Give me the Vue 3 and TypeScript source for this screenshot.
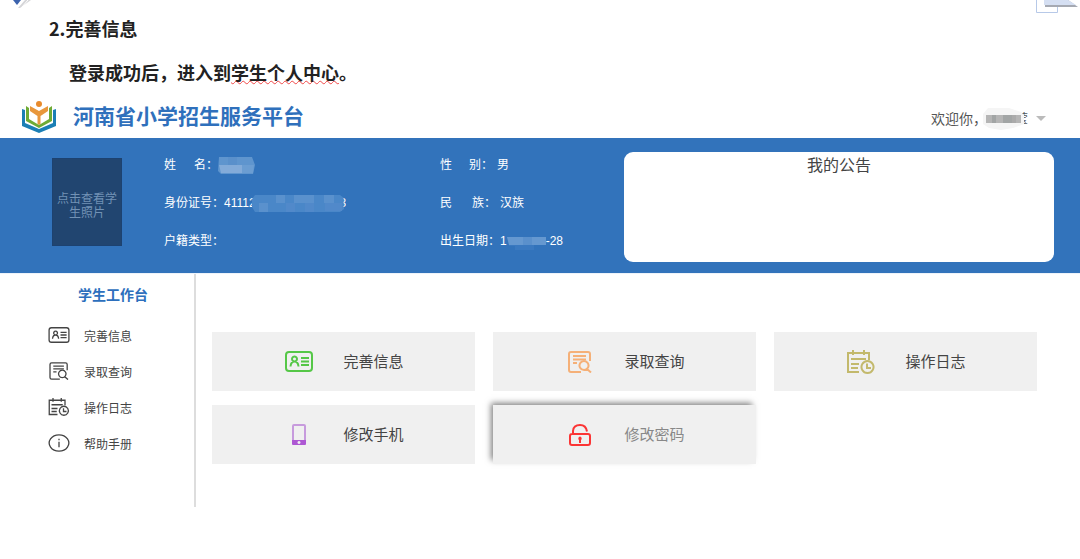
<script setup lang="ts">
interface Stroke {
  d: string
  fill?: boolean
}

interface Icon {
  width: number
  height: number
  strokes: Stroke[]
}

interface Entry {
  label: string
  icon: string
}

interface Tile extends Entry {
  tone: string
  active?: boolean
}

const icons: Record<string, Icon> = {
  card: {
    width: 28,
    height: 21,
    strokes: [
      { d: 'M4 1H24Q27 1 27 4V17Q27 20 24 20H4Q1 20 1 17V4Q1 1 4 1Z' },
      { d: 'M9.500 5.500a2.500 2.500 0 1 0 .01 0M5.500 15.500Q6 10.500 9.500 10.500T13.500 15.500M16 7H24M16 10.500H24M16 14H24' },
    ],
  },
  search: {
    width: 24,
    height: 22,
    strokes: [
      { d: 'M13 21H3Q1 21 1 19V3Q1 1 3 1H20Q22 1 22 3V10M5 5H18M5 8.500H18M5 12H9' },
      { d: 'M16 10a4.500 4.500 0 1 0 .01 0M19 18L23 21.500' },
    ],
  },
  log: {
    width: 28,
    height: 24,
    strokes: [
      { d: 'M12 22H1V3H22V10M6 0V5M17 0V5M4 9H19M4 14H12M4 18H11' },
      { d: 'M20.500 11a6 6 0 1 0 .01 0M20 13.500V18H24' },
    ],
  },
  info: {
    width: 28,
    height: 23,
    strokes: [
      { d: 'M14 1A12.500 10.500 0 1 0 14.010 1' },
      { d: 'M14 10V17M14 6V8' },
    ],
  },
  phone: {
    width: 14,
    height: 21,
    strokes: [
      { d: 'M1 17V2Q1 1 2 1H12Q13 1 13 2V17' },
      { d: 'M0 16H14V20Q14 21 13 21H1Q0 21 0 20ZM7 17a1.500 1.500 0 1 0 .01 0Z', fill: true },
    ],
  },
  lock: {
    width: 22,
    height: 22,
    strokes: [
      { d: 'M3 10H19Q21 10 21 12V19Q21 21 19 21H3Q1 21 1 19V12Q1 10 3 10ZM4 10V7Q4.500 1 11 1Q17 1 18 7.500' },
      { d: 'M11 12.500a2 2 0 0 1 1 3.500V19H10V16a2 2 0 0 1 1-3.500Z', fill: true },
    ],
  },
}

const menu: Entry[] = [
  { label: '完善信息', icon: 'card' },
  { label: '录取查询', icon: 'search' },
  { label: '操作日志', icon: 'log' },
  { label: '帮助手册', icon: 'info' },
]

const tiles: Tile[] = [
  { label: '完善信息', icon: 'card', tone: 'green' },
  { label: '录取查询', icon: 'search', tone: 'orange' },
  { label: '操作日志', icon: 'log', tone: 'olive' },
  { label: '修改手机', icon: 'phone', tone: 'purple' },
  { label: '修改密码', icon: 'lock', tone: 'red', active: true },
]
</script>

<template>
  <div class="page">
    <svg class="corner-left" viewBox="0 0 32 10" aria-hidden="true">
      <path d="M20 8L31 0H25L18 8Z" fill="#d5d5d8" />
      <path d="M13 0H21L17 5Z" fill="#3d63ad" />
      <path d="M22 7L28 0" stroke="#fff" stroke-width="1" />
    </svg>
    <svg class="corner-right" viewBox="0 0 46 16" aria-hidden="true">
      <path d="M2.500 0V12.500H23.500V0" fill="#fff" stroke="#b7c9e8" />
      <path d="M11 0H34L44 7H11Z" fill="#a5a9b2" />
      <path d="M10 0H34L42 5H10Z" fill="#d5dff2" />
    </svg>

    <section class="guide">
      <h1>2.完善信息</h1>
      <p>登录成功后，进入到<span class="checked">学生个人中心</span>。</p>
    </section>

    <header class="topbar">
      <svg class="logo" viewBox="0 0 34 32" aria-hidden="true">
        <circle cx="17" cy="3" r="3" fill="#e88b2d" />
        <path d="M8 5L17 10L26 5V10L18.500 15V23L17 24L15.500 23V15L8 10Z" fill="#e8973c" />
        <path d="M4 5L7 7V18L17 24L27 18V7L30 5V20L17 27L4 20Z" fill="#6eab35" />
        <path d="M0 8L3 9V22L17 28L31 22V9L34 8V25L17 32L0 25Z" fill="#1b7fb5" />
      </svg>
      <h2>河南省小学招生服务平台</h2>
      <button class="account" type="button">
        <span>欢迎你，</span>
        <span class="user">
          <span class="user-name">莹</span>
          <svg class="user-mask" viewBox="0 0 46 23" aria-hidden="true">
            <path d="M5 1H26L38 5L41 8V17L30 21L18 23L6 21L0 17V7Z" fill="#f5f5f5" />
            <path d="M3 8H38V16H3Z" fill="#b5b5b5" />
            <path d="M9 8H13V16H9ZM20 8H29V16H20Z" fill="#a2a5a5" />
            <path d="M29 8H33V16H29Z" fill="#aaa" />
          </svg>
        </span>
        <svg class="caret" viewBox="0 0 10 5" aria-hidden="true"><path d="M0 0H10L5 5Z" fill="#bbb" /></svg>
      </button>
    </header>

    <section class="profile">
      <button class="photo" type="button">点击查看学生照片</button>
      <dl class="facts">
        <div>
          <dt><span class="pair name"><i>姓</i><i>名</i></span>：</dt>
          <dd>
            <svg class="mask short" viewBox="0 0 37 17" preserveAspectRatio="none" aria-hidden="true">
              <path d="M1 0H34L37 8L35 17H3L0 14Z" fill="#5f95ce" />
              <path d="M1 8H24V16H3Z" fill="#83abd9" />
              <path d="M24 8H36L35 16H24Z" fill="#6b9dd2" />
              <path d="M10 0H19V8H10Z" fill="#5a90cb" />
            </svg>
          </dd>
        </div>
        <div>
          <dt>身份证号：</dt>
          <dd>
            <span>41112</span>
            <svg class="mask long" viewBox="0 0 92 17" preserveAspectRatio="none" aria-hidden="true">
              <path d="M3 0H88L92 3V14L88 17H3L0 12V4Z" fill="#4a87c8" />
              <path d="M7 8H16V17H7ZM24 0H33V8H24ZM42 0H62V8H42ZM72 0H82V8H72Z" fill="#5a91cd" />
              <path d="M34 8H43V17H34ZM53 8H62V17H53ZM73 8H90V16H73Z" fill="#5189ca" />
            </svg>
            <span class="tail">3</span>
          </dd>
        </div>
        <div>
          <dt>户籍类型：</dt>
          <dd></dd>
        </div>
      </dl>
      <dl class="facts">
        <div>
          <dt><span class="pair gender"><i>性</i><i>别</i></span>：</dt>
          <dd class="spaced">男</dd>
        </div>
        <div>
          <dt><span class="pair nation"><i>民</i><i>族</i></span>：</dt>
          <dd class="spaced">汉族</dd>
        </div>
        <div>
          <dt>出生日期：</dt>
          <dd>
            <span>1</span>
            <svg class="mask medium" viewBox="0 0 39 17" preserveAspectRatio="none" aria-hidden="true">
              <path d="M0 4H38V12H27V17H8V13H2Z" fill="#3a79c0" />
              <path d="M0 4H39V12H2Z" fill="#6598d0" />
              <path d="M16 4H25V12H16Z" fill="#5a90cc" />
            </svg>
            <span>-28</span>
          </dd>
        </div>
      </dl>
      <section class="notice">
        <h3>我的公告</h3>
      </section>
    </section>

    <div class="workspace">
      <nav class="sidebar" aria-label="学生工作台">
        <h3>学生工作台</h3>
        <a v-for="item in menu" :key="item.label" href="#">
          <svg :class="['menu-icon', item.icon]" :viewBox="`0 0 ${icons[item.icon].width} ${icons[item.icon].height}`" aria-hidden="true">
            <path v-for="s in icons[item.icon].strokes" :key="s.d" :d="s.d" :class="{ solid: s.fill }" />
          </svg>
          <span>{{ item.label }}</span>
        </a>
      </nav>
      <main class="tiles">
        <a v-for="tile in tiles" :key="tile.label" href="#" :class="['tile', { active: tile.active }]">
          <span :class="['slot', tile.tone]">
            <svg :class="['tile-icon', tile.icon]" :viewBox="`0 0 ${icons[tile.icon].width} ${icons[tile.icon].height}`" aria-hidden="true">
              <path v-for="s in icons[tile.icon].strokes" :key="s.d" :d="s.d" :class="{ solid: s.fill }" />
            </svg>
          </span>
          <span>{{ tile.label }}</span>
        </a>
      </main>
    </div>
  </div>
</template>

<style>
body {
  background: #fff;
}
</style>

<style scoped>
.page {
  position: relative;
  overflow: hidden;
  color: #444;
  font-family: "Liberation Sans", "Noto Sans CJK SC", sans-serif;
  font-size: 12px;
}

h1,
h2,
h3,
p,
dl,
dd {
  margin: 0;
}

button {
  border: 0;
  padding: 0;
  background: none;
  font-family: inherit;
  cursor: pointer;
}

a {
  color: inherit;
  text-decoration: none;
}

svg {
  display: block;
  flex: none;
}

.corner-left {
  position: absolute;
  top: 0;
  left: 0;
  width: 32px;
  height: 10px;
}

.corner-right {
  position: absolute;
  top: 0;
  right: 0;
  width: 46px;
  height: 16px;
}

.guide {
  padding: 6px 49px 1px;
  color: #222;
  font-family: "Noto Sans CJK SC", sans-serif;
}

.guide h1,
.guide p {
  font-size: 18px;
  font-weight: 700;
  line-height: 44px;
}

.guide p {
  padding-left: 20px;
}

.checked {
  text-decoration: underline wavy #f04848 1px;
  text-decoration-skip-ink: none;
  text-underline-offset: 0;
}

.topbar {
  display: flex;
  align-items: center;
  min-height: 43px;
  padding: 0 34px 0 22px;
}

.logo {
  width: 34px;
  height: 32px;
}

.topbar h2 {
  margin-left: 17px;
  color: #2f70bc;
  font-size: 21px;
  line-height: 30px;
}

.account {
  display: flex;
  align-items: center;
  margin-left: auto;
  padding-top: 4px;
  color: #555;
  font-size: 14px;
  line-height: 20px;
}

.user {
  position: relative;
  display: flex;
  justify-content: flex-end;
  width: 41px;
  margin-right: 8px;
}

.user-name {
  font-size: 12px;
}

.user-mask {
  position: absolute;
  top: -2px;
  left: -4px;
  width: 46px;
  height: 23px;
}

.caret {
  width: 10px;
  height: 5px;
}

.profile {
  display: grid;
  grid-template-columns: 112px minmax(0, 276fr) minmax(0, 184fr) minmax(0, 430fr);
  align-items: start;
  padding: 14px 26px 11px 52px;
  background: #3273bb;
  color: #fff;
}

.photo {
  width: 70px;
  height: 88px;
  margin-top: 6px;
  padding: 12px 4px 4px;
  border: 1px solid #1d4270;
  background: #214570;
  color: #7292b5;
  font-size: 12px;
  line-height: 14px;
}

.facts {
  display: grid;
  gap: 16px;
  padding-top: 2px;
  line-height: 22px;
}

.facts div,
.facts dd {
  display: flex;
  align-items: center;
  white-space: nowrap;
}

.facts div {
  height: 22px;
}

.facts dt {
  display: flex;
}

.facts i {
  font-style: normal;
}

.pair {
  display: flex;
  justify-content: space-between;
}

.name {
  width: 42px;
}

.gender {
  width: 41px;
}

.nation {
  width: 44px;
}

.facts .spaced {
  padding-left: 4px;
}

.mask {
  position: relative;
  height: 17px;
}

.short {
  width: 37px;
}

.medium {
  width: 39px;
}

.long {
  width: 92px;
  margin: 0 -4px 0 -4px;
}

.tail {
  clip-path: inset(0 0 0 4px);
}

.notice {
  min-height: 110px;
  border-radius: 9px;
  background: #fff;
  color: #444;
  text-align: center;
}

.notice h3 {
  font-size: 16px;
  font-weight: 400;
  line-height: 28px;
}

.workspace {
  display: flex;
  align-items: stretch;
  border-top: 1px solid #edf3fa;
}

.sidebar {
  box-sizing: border-box;
  flex: none;
  width: 196px;
  min-height: 233px;
  padding: 7px 0 40px 48px;
  border-right: 2px solid #ddd;
}

.sidebar h3 {
  margin: 0 0 8px 30px;
  color: #2d6fbd;
  font-size: 14px;
  line-height: 28px;
}

.sidebar a {
  display: flex;
  align-items: center;
  height: 36px;
}

.sidebar a span {
  margin-left: 14px;
}

.menu-icon {
  width: 22px;
  height: 18px;
}

.menu-icon.card {
  height: 16px;
}

.menu-icon path,
.tile-icon path {
  fill: none;
  stroke: currentColor;
  stroke-width: 2;
  vector-effect: non-scaling-stroke;
}

.menu-icon path {
  stroke-width: 1.3;
}

.menu-icon path.solid,
.tile-icon path.solid {
  fill: currentColor;
  fill-rule: evenodd;
  stroke: none;
}

.tiles {
  display: grid;
  flex: 1;
  grid-template-columns: repeat(3, minmax(0, 1fr));
  grid-auto-rows: 59px;
  gap: 14px 18px;
  align-content: start;
  padding: 58px 43px 0 16px;
}

.tile {
  display: flex;
  align-items: center;
  justify-content: center;
  gap: 30px;
  padding-left: 2px;
  background: #f0f0f0;
  color: #444;
  font-size: 15px;
  line-height: 22px;
}

.tile.active {
  box-shadow: -3px -3px 6px -1px rgba(0, 0, 0, 0.5);
  color: #888;
}

.slot {
  display: flex;
  align-items: center;
  justify-content: center;
  width: 28px;
}

.tile-icon.card {
  width: 28px;
  height: 21px;
}

.tile-icon.search {
  width: 24px;
  height: 22px;
}

.tile-icon.log {
  width: 28px;
  height: 24px;
}

.tile-icon.phone {
  width: 14px;
  height: 21px;
}

.tile-icon.lock {
  width: 22px;
  height: 22px;
}

.green {
  color: #55c747;
}

.orange {
  color: #f5b078;
}

.olive {
  color: #c3b96c;
}

.purple {
  color: #ad57d3;
}

.phone path:first-child {
  stroke: #c79bdd;
}

.red {
  color: #fb3535;
}
</style>
